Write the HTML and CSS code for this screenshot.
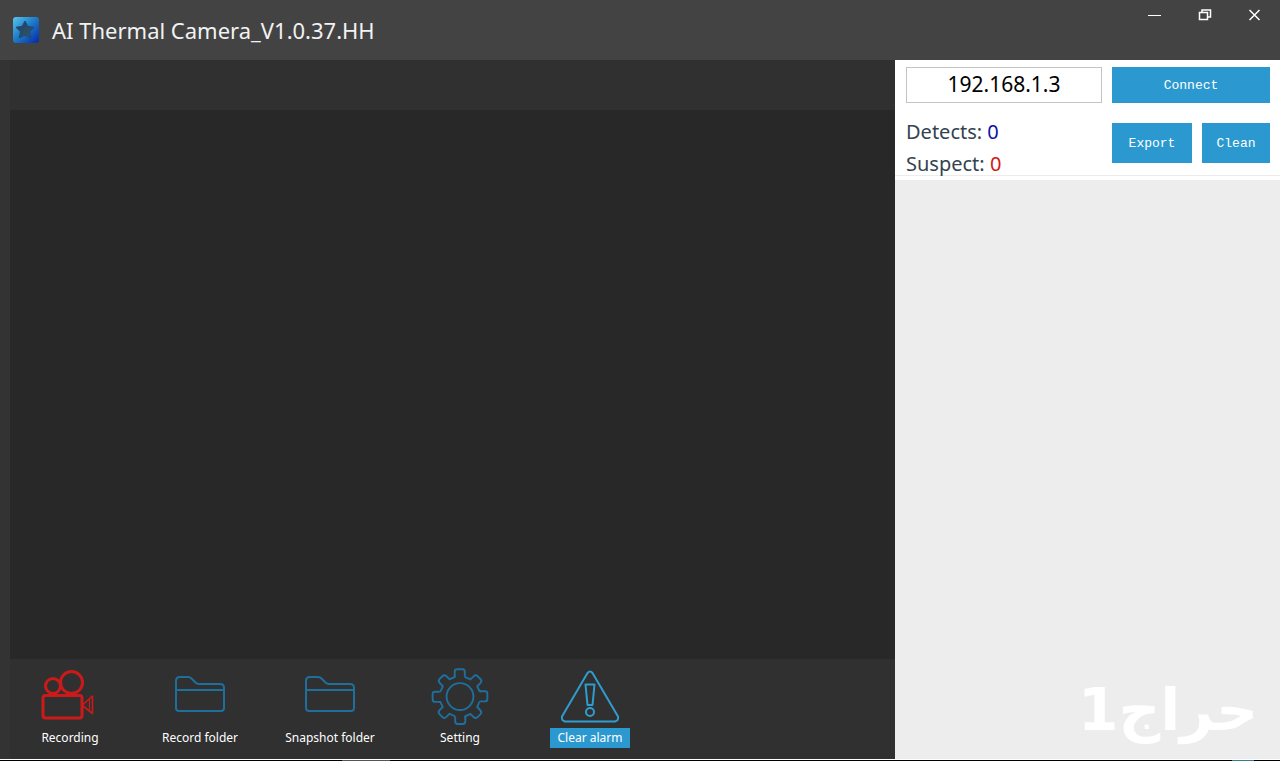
FILE: index.html
```html
<!DOCTYPE html>
<html lang="en">
<head>
  <meta charset="UTF-8">
  <meta name="viewport" content="width=device-width, initial-scale=1">
  <title>AI Thermal Camera</title>
  <link rel="stylesheet" href="styles.css">
</head>
<body>
  <header class="titlebar">
    <svg class="logo" viewBox="0 0 26 26" aria-hidden="true">
      <defs>
        <linearGradient id="logo-bg" x1="0" y1="0" x2="1" y2="1">
          <stop offset="0" stop-color="#5cc4ee"/>
          <stop offset="0.45" stop-color="#1f7fc8"/>
          <stop offset="1" stop-color="#0527a8"/>
        </linearGradient>
        <linearGradient id="logo-star" x1="0" y1="0" x2="1" y2="1">
          <stop offset="0" stop-color="#17405f"/>
          <stop offset="1" stop-color="#3a566e"/>
        </linearGradient>
      </defs>
      <rect width="26" height="26" rx="3" fill="url(#logo-bg)"/>
      <path d="M12 4l2.800 5.400 6.200.9-4.500 4.400 1.200 6.200-5.700-2.900-5.700 2.900 1.200-6.200-4.500-4.400 6.200-.9z" fill="url(#logo-star)" stroke="#1c4a70" stroke-linejoin="round"/>
    </svg>
    <h1>AI Thermal Camera_V1.0.37.HH</h1>
    <div class="window-controls">
      <button type="button" aria-label="Minimize">
        <svg viewBox="0 0 14 14"><path d="M0 7.500h13"/></svg>
      </button>
      <button type="button" aria-label="Restore">
        <svg viewBox="0 0 14 14"><path d="M1.500 4.500h8v7h-8zM4 4.500v-2.500h8.500v7h-3" stroke-width="1.500"/></svg>
      </button>
      <button type="button" aria-label="Close">
        <svg viewBox="0 0 14 14"><path d="M1.500 2l10 10M11.500 2l-10 10" stroke-width="1.500"/></svg>
      </button>
    </div>
  </header>

  <div class="content">
    <main class="viewer">
      <div class="viewer-top"></div>
      <div class="video"></div>
      <nav class="toolbar">
        <button type="button" class="tool recording">
          <svg viewBox="0 0 60 60" aria-hidden="true">
            <circle cx="31.500" cy="15.500" r="11"/>
            <circle cx="13" cy="19" r="7.500"/>
            <rect x="3" y="28.500" width="39" height="22.500" rx="2.500"/>
            <path d="M43 37.500L52.500 29v17.500L43 39" stroke-width="1.600"/>
            <path d="M49.500 32v11.500" stroke-width="1.200"/>
          </svg>
          <span>Recording</span>
        </button>
        <button type="button" class="tool">
          <svg viewBox="0 0 60 60" aria-hidden="true">
            <path d="M6 41V14q0-4 4-4h8q2 0 3.500 1.500l4 4Q27 17 29 17h21q4 0 4 4v20q0 3-3 3H9q-3 0-3-3zM6 23h48"/>
          </svg>
          <span>Record folder</span>
        </button>
        <button type="button" class="tool">
          <svg viewBox="0 0 60 60" aria-hidden="true">
            <path d="M6 41V14q0-4 4-4h8q2 0 3.500 1.500l4 4Q27 17 29 17h21q4 0 4 4v20q0 3-3 3H9q-3 0-3-3zM6 23h48"/>
          </svg>
          <span>Snapshot folder</span>
        </button>
        <button type="button" class="tool">
          <svg viewBox="0 0 60 60" aria-hidden="true">
            <defs>
              <path id="gear-quarter" d="M24.500 9.500V4q0-2.500 2.500-2.500h5.500q2.500 0 2.500 2.500v4q0 2 2 2.500 2.500.8 3.800 1.600l3.400-3.200q2-2 4-.3l3.300 3.300q1.700 2-.3 4l-3.200 3.300q1 2 1.800 4 .5 1.300 2 1.300"/>
            </defs>
            <g transform="translate(1.200 .8) scale(.96)">
              <use href="#gear-quarter"/>
              <use href="#gear-quarter" transform="rotate(90 30 30)"/>
              <use href="#gear-quarter" transform="rotate(180 30 30)"/>
              <use href="#gear-quarter" transform="rotate(270 30 30)"/>
              <circle cx="30" cy="30" r="14"/>
            </g>
          </svg>
          <span>Setting</span>
        </button>
        <button type="button" class="tool alarm">
          <svg viewBox="0 0 60 60" aria-hidden="true">
            <path d="M27.500 6q2.500-3 5 0L58 49.500q1 4-3 5H5q-4-1-3-5z"/>
            <path d="M25.500 17.500h9l-2 20.500h-5z"/>
            <circle cx="30" cy="45" r="4"/>
          </svg>
          <span>Clear alarm</span>
        </button>
      </nav>
    </main>

    <aside class="sidebar">
      <section class="panel">
        <div class="row">
          <input type="text" class="address" aria-label="Camera address" value="192.168.1.3">
          <button type="button" class="btn connect">Connect</button>
        </div>
        <div class="row stats">
          <div class="counters">
            <p>Detects: <b class="detects">0</b></p>
            <p>Suspect: <b class="suspect">0</b></p>
          </div>
          <div class="actions">
            <button type="button" class="btn export">Export</button>
            <button type="button" class="btn clean">Clean</button>
          </div>
        </div>
      </section>
      <div class="results">
        <p class="watermark" lang="ar" dir="rtl">حراج1</p>
      </div>
    </aside>
  </div>

  <footer class="taskbar">
    <span class="task"></span>
    <span class="tray"></span>
  </footer>
</body>
</html>
```

FILE: styles.css
```css
* {
  box-sizing: border-box;
}

body {
  margin: 0;
  height: 100vh;
  display: flex;
  flex-direction: column;
  overflow: hidden;
  background: #333333;
  font-family: "Noto Sans", "Open Sans", sans-serif;
}

button {
  margin: 0;
  padding: 0;
  border: 0;
  background: none;
  color: #ffffff;
  font-family: inherit;
  cursor: pointer;
}

h1,
p {
  margin: 0;
}

/* title bar */
.titlebar {
  flex: none;
  height: 60px;
  padding-left: 13px;
  display: flex;
  align-items: center;
  gap: 13px;
  background: #434343;
}

.logo {
  width: 26px;
  height: 26px;
}

.titlebar h1 {
  flex: 1;
  color: #f2f2f2;
  font-size: 22px;
  font-weight: 400;
}

.window-controls {
  align-self: flex-start;
  display: flex;
}

.window-controls button {
  width: 50px;
  height: 30px;
  display: flex;
  align-items: center;
  justify-content: center;
}

.window-controls svg {
  width: 14px;
  height: 14px;
  fill: none;
  stroke: #ffffff;
}

/* video side */
.content {
  flex: 1;
  min-height: 0;
  display: flex;
}

.viewer {
  flex: 1;
  margin-left: 10px;
  display: flex;
  flex-direction: column;
  background: #303030;
}

.viewer-top {
  height: 50px;
}

.video {
  flex: 1;
  background: #282828;
}

.toolbar {
  height: 100px;
  padding-top: 8px;
  display: flex;
  align-items: flex-start;
  gap: 10px;
}

.tool {
  width: 120px;
  display: flex;
  flex-direction: column;
  align-items: center;
  font-size: 12px;
  line-height: 20px;
}

.tool svg {
  width: 60px;
  height: 60px;
  fill: none;
  stroke: #1f6f9c;
  stroke-width: 2;
  stroke-linecap: round;
  stroke-linejoin: round;
}

.tool.recording svg {
  stroke: #cc1a1a;
  stroke-width: 3;
}

.tool.alarm svg {
  stroke: #2f9ccf;
}

.tool span {
  min-width: 80px;
  height: 20px;
  margin-top: 1px;
}

.tool.alarm span {
  background: #2b99d0;
}

/* right side */
.sidebar {
  width: 385px;
  display: flex;
  flex-direction: column;
  background: #ededed;
}

.panel {
  height: 120px;
  padding: 7px 10px 0 11px;
  background: linear-gradient(#ececec, #ececec) 0 115px / 100% 1px no-repeat #ffffff;
}

.row {
  display: flex;
  gap: 10px;
}

.address {
  flex: 1;
  min-width: 0;
  height: 36px;
  padding: 0 2px 2px;
  border: 1px solid #c4c4c4;
  background: #ffffff;
  color: #000000;
  font-family: inherit;
  font-size: 21px;
  text-align: center;
}

.btn {
  height: 40px;
  background: #2b99d0;
  font-family: "Liberation Mono", monospace;
  font-size: 13px;
}

.connect {
  width: 158px;
  height: 36px;
}

.stats {
  margin-top: 13px;
}

.counters {
  flex: 1;
  color: #34434f;
  font-size: 20px;
  line-height: 32px;
}

.counters b {
  font-weight: 400;
}

.detects {
  color: #1010a8;
}

.suspect {
  color: #d01818;
}

.actions {
  margin-top: 7px;
  display: flex;
  gap: 10px;
}

.export {
  width: 80px;
}

.clean {
  width: 68px;
}

.results {
  flex: 1;
  padding: 0 22px 14px 0;
  display: flex;
  align-items: flex-end;
  justify-content: flex-end;
}

.watermark {
  color: #ffffff;
  font-family: "DejaVu Sans", sans-serif;
  font-size: 58px;
  font-weight: 700;
  line-height: 70px;
}

/* edge of the desktop taskbar */
.taskbar {
  flex: none;
  height: 2px;
  padding: 0 26px 0 342px;
  display: flex;
  justify-content: space-between;
  border-top: 1px solid #ffffff;
  background: #000000;
}

.task {
  width: 48px;
  background: #555555;
}

.tray {
  width: 22px;
  background: #2f7f88;
}
```
